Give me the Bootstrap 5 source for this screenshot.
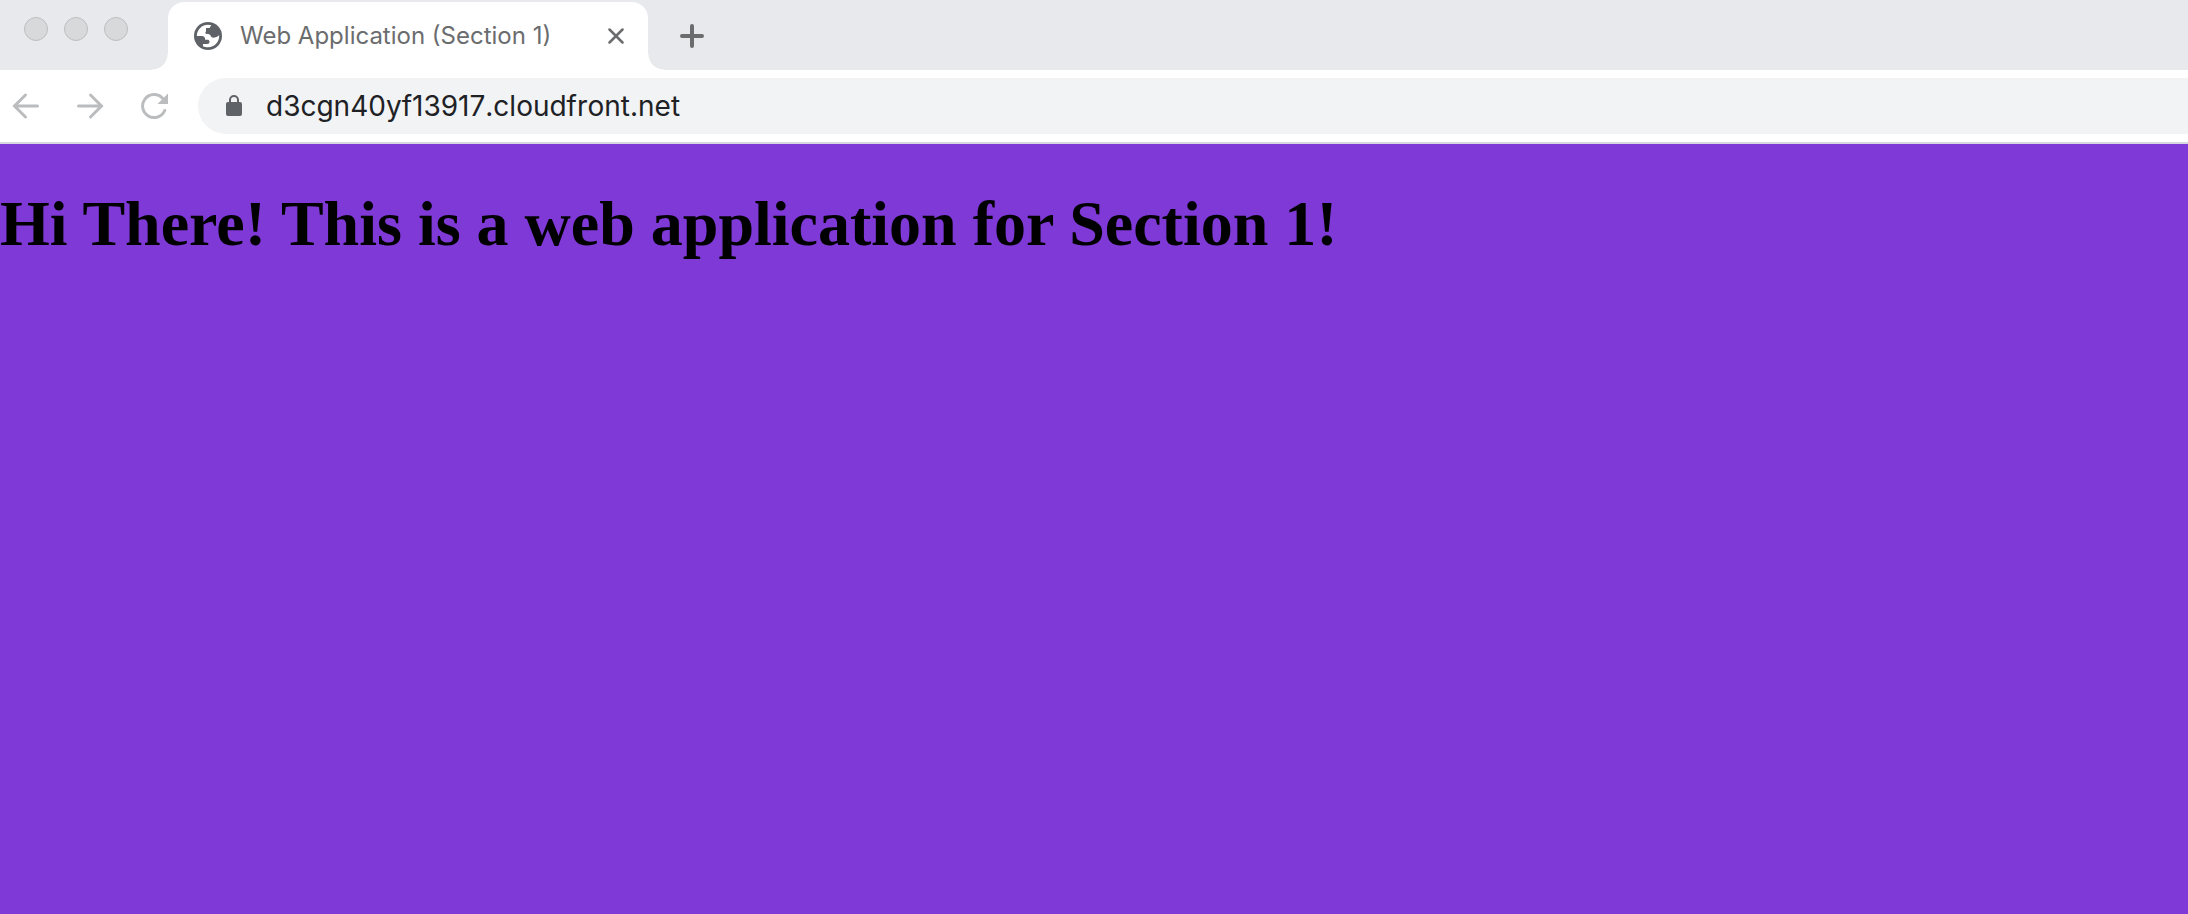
<!DOCTYPE html>
<html lang="en">
<head>
<meta charset="utf-8">
<meta name="viewport" content="width=device-width, initial-scale=1">
<title>Web Application (Section 1)</title>
<link href="https://cdn.jsdelivr.net/npm/bootstrap@5.3.0/dist/css/bootstrap.min.css" rel="stylesheet">
<style>
  body { font-family: Inter, "Liberation Sans", sans-serif; background: #7f39d7; }
  .tab-strip { height: 70px; background: #e8e9ed; }
  .window-dots { width: 168px; padding: 17px 0 0 24px; gap: 16px; }
  .window-dot { width: 24px; height: 24px; background: #d8d9db; border: 1px solid #bdbec0; }
  .browser-tab { width: 480px; margin-top: 2px; padding: 0 24px 0 26px; background: #fff; border-radius: 16px 16px 0 0; color: #6b6c6e; }
  .browser-tab::before, .browser-tab::after { content: ""; position: absolute; bottom: 0; width: 16px; height: 16px; }
  .browser-tab::before { right: 100%; background: radial-gradient(circle at 0 0, transparent 15px, #fff 16px); }
  .browser-tab::after { left: 100%; background: radial-gradient(circle at 100% 0, transparent 15px, #fff 16px); }
  .tab-title { font-size: 24px; line-height: 32px; margin-left: 18px; }
  .icon-button { color: #6b6c6e; line-height: 0; }
  .new-tab { margin: 2px 0 0 32px; }
  .toolbar { height: 74px; border-bottom: 2px solid #d9d6e0; }
  .nav-buttons { width: 198px; padding-left: 12px; gap: 36px; }
  .nav-buttons .icon-button { color: #babcbe; }
  .address-bar { height: 56px; padding-left: 28px; background: #f1f3f4; border-radius: 28px 0 0 28px; color: #5f6368; }
  .address-input { margin-left: 24px; font-size: 28px; line-height: 36px; font-kerning: none; color: #202124; background: transparent; outline: 0; }
  .page-heading { padding-top: 42px; font: bold 64px/76px "Liberation Serif", serif; color: #000; }
</style>
</head>
<body>
<header>
  <div class="tab-strip d-flex">
    <div class="window-dots d-flex flex-shrink-0">
      <span class="window-dot rounded-circle"></span>
      <span class="window-dot rounded-circle"></span>
      <span class="window-dot rounded-circle"></span>
    </div>
    <div class="browser-tab d-flex align-items-center position-relative flex-shrink-0">
      <svg width="28" height="28" viewBox="0 0 28 28" aria-hidden="true">
        <circle cx="14" cy="14" r="14" fill="#5f6368"/>
        <path fill="#fff" d="M2.800 14C3 7.500 8 2.800 14 2.800C15.200 2.800 16.300 3 17.300 3.300L15.500 6H12V9.500C11 10.300 11 11.500 12.500 12C15 12 16.500 12.500 17 14.500C18 16 20 15.800 21.500 15.300C23 14.800 24 14 25.200 13.200C25.500 20 20.500 25.200 14 25.200C12 25.200 10.500 24.900 9 24.200V22H13C15 22 15.700 21 15.500 19.500C15.300 18.200 14.500 17.800 13 17.800H11.200C11.200 15.200 10 14 8 14Z"/>
      </svg>
      <span class="tab-title flex-grow-1 text-nowrap">Web Application (Section 1)</span>
      <button type="button" class="icon-button btn p-0 border-0" aria-label="Close tab">
        <svg width="16" height="16" viewBox="0 0 16 16" fill="none" stroke="currentColor" stroke-width="2.500" stroke-linecap="round"><path d="M1.500 1.500L14.500 14.500M14.500 1.500L1.500 14.500"/></svg>
      </button>
    </div>
    <button type="button" class="new-tab icon-button btn p-0 border-0" aria-label="New tab">
      <svg width="24" height="24" viewBox="0 0 24 24" fill="none" stroke="currentColor" stroke-width="4" stroke-linecap="round"><path d="M12 2V22M2 12H22"/></svg>
    </button>
  </div>
  <div class="toolbar d-flex align-items-center bg-white">
    <nav class="nav-buttons d-flex flex-shrink-0" aria-label="History">
      <button type="button" class="icon-button btn p-0 border-0" aria-label="Back">
        <svg width="28" height="28" viewBox="0 0 28 28" fill="none" stroke="currentColor" stroke-width="3" stroke-linecap="round"><path d="M25.500 14H3M13.500 3L2.500 14L13.500 25"/></svg>
      </button>
      <button type="button" class="icon-button btn p-0 border-0" aria-label="Forward">
        <svg width="28" height="28" viewBox="0 0 28 28" fill="none" stroke="currentColor" stroke-width="3" stroke-linecap="round"><path d="M2.500 14H25M14.500 3L25.500 14L14.500 25"/></svg>
      </button>
      <button type="button" class="icon-button btn p-0 border-0" aria-label="Reload">
        <svg width="28" height="28" viewBox="0 0 28 28" fill="none" stroke="currentColor" stroke-width="3" stroke-linecap="round"><path d="M24.700 18.500A11.500 11.500 0 1 1 22.500 6.200"/><path fill="currentColor" stroke="none" d="M28 1.500V12H17.500Z"/></svg>
      </button>
    </nav>
    <form class="address-bar d-flex align-items-center flex-grow-1">
      <svg width="16" height="22" viewBox="0 0 16 22" aria-hidden="true"><rect y="7" width="16" height="14" rx="2" fill="currentColor"/><path fill="none" stroke="currentColor" stroke-width="2" d="M4 8V5A4 4 0 0 1 12 5V8"/></svg>
      <input type="text" class="address-input flex-grow-1 border-0 p-0" aria-label="Address" value="d3cgn40yf13917.cloudfront.net" spellcheck="false">
    </form>
  </div>
</header>
<main>
  <h1 class="page-heading m-0">Hi There! This is a web application for Section 1!</h1>
</main>
<script src="https://cdn.jsdelivr.net/npm/bootstrap@5.3.0/dist/js/bootstrap.bundle.min.js"></script>
</body>
</html>
